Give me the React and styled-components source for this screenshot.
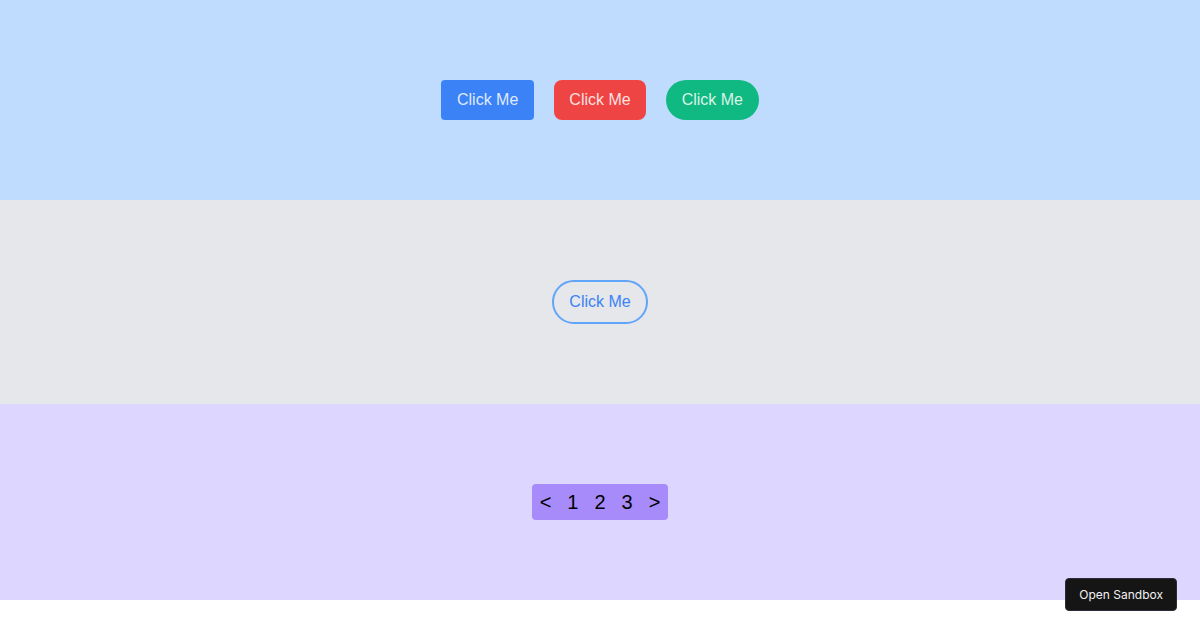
import React from "react";
import styled, { createGlobalStyle, css } from "styled-components";

const Global = createGlobalStyle`
  html, body { margin: 0; padding: 0; background: #fff; }
  body { font-family: "Liberation Sans", Arial, sans-serif; }
`;

const Section = styled.section`
  background: ${(p) => p.$bg};
  padding: 80px 0;
  display: flex;
  justify-content: center;
  align-items: center;
  gap: 20px;
`;

const radii = { sm: "4px", md: "8px", full: "9999px" };

const Button = styled.button`
  appearance: none;
  border: none;
  font-family: inherit;
  font-size: 16px;
  line-height: 24px;
  padding: 8px 15.5px;
  cursor: pointer;
  color: rgba(255, 255, 255, 0.85);
  background: ${(p) => p.$bg};
  border-radius: ${(p) => radii[p.$radius || "sm"]};

  ${(p) =>
    p.$outline &&
    css`
      background: transparent;
      color: #3b82f6;
      border: 2px solid #60a5fa;
    `}
`;

const Pager = styled.nav`
  display: flex;
  background: #a78bfa;
  border-radius: 4px;
`;

const PageItem = styled.button`
  appearance: none;
  border: none;
  background: transparent;
  font-family: inherit;
  font-size: 20px;
  line-height: 28px;
  padding: 4px 8px;
  color: #000;
  cursor: pointer;
`;

const Sandbox = styled.a`
  position: fixed;
  right: 23px;
  bottom: 19px;
  height: 33px;
  box-sizing: border-box;
  display: inline-flex;
  align-items: center;
  padding: 0 13px;
  background: #151515;
  border: 1px solid #2b2b3a;
  border-radius: 4px;
  color: #f2f2f2;
  font-family: Inter, "Liberation Sans", sans-serif;
  font-size: 12px;
  text-decoration: none;
`;

export default function App() {
  return (
    <>
      <Global />
      <Section $bg="#bfdbfe">
        <Button $bg="#3b82f6" $radius="sm">Click Me</Button>
        <Button $bg="#ef4444" $radius="md">Click Me</Button>
        <Button $bg="#10b981" $radius="full">Click Me</Button>
      </Section>
      <Section $bg="#e5e7eb">
        <Button $outline $radius="full">Click Me</Button>
      </Section>
      <Section $bg="#ddd6fe">
        <Pager>
          {["<", "1", "2", "3", ">"].map((p) => (
            <PageItem key={p}>{p}</PageItem>
          ))}
        </Pager>
      </Section>
      <Sandbox href="#">Open Sandbox</Sandbox>
    </>
  );
}
